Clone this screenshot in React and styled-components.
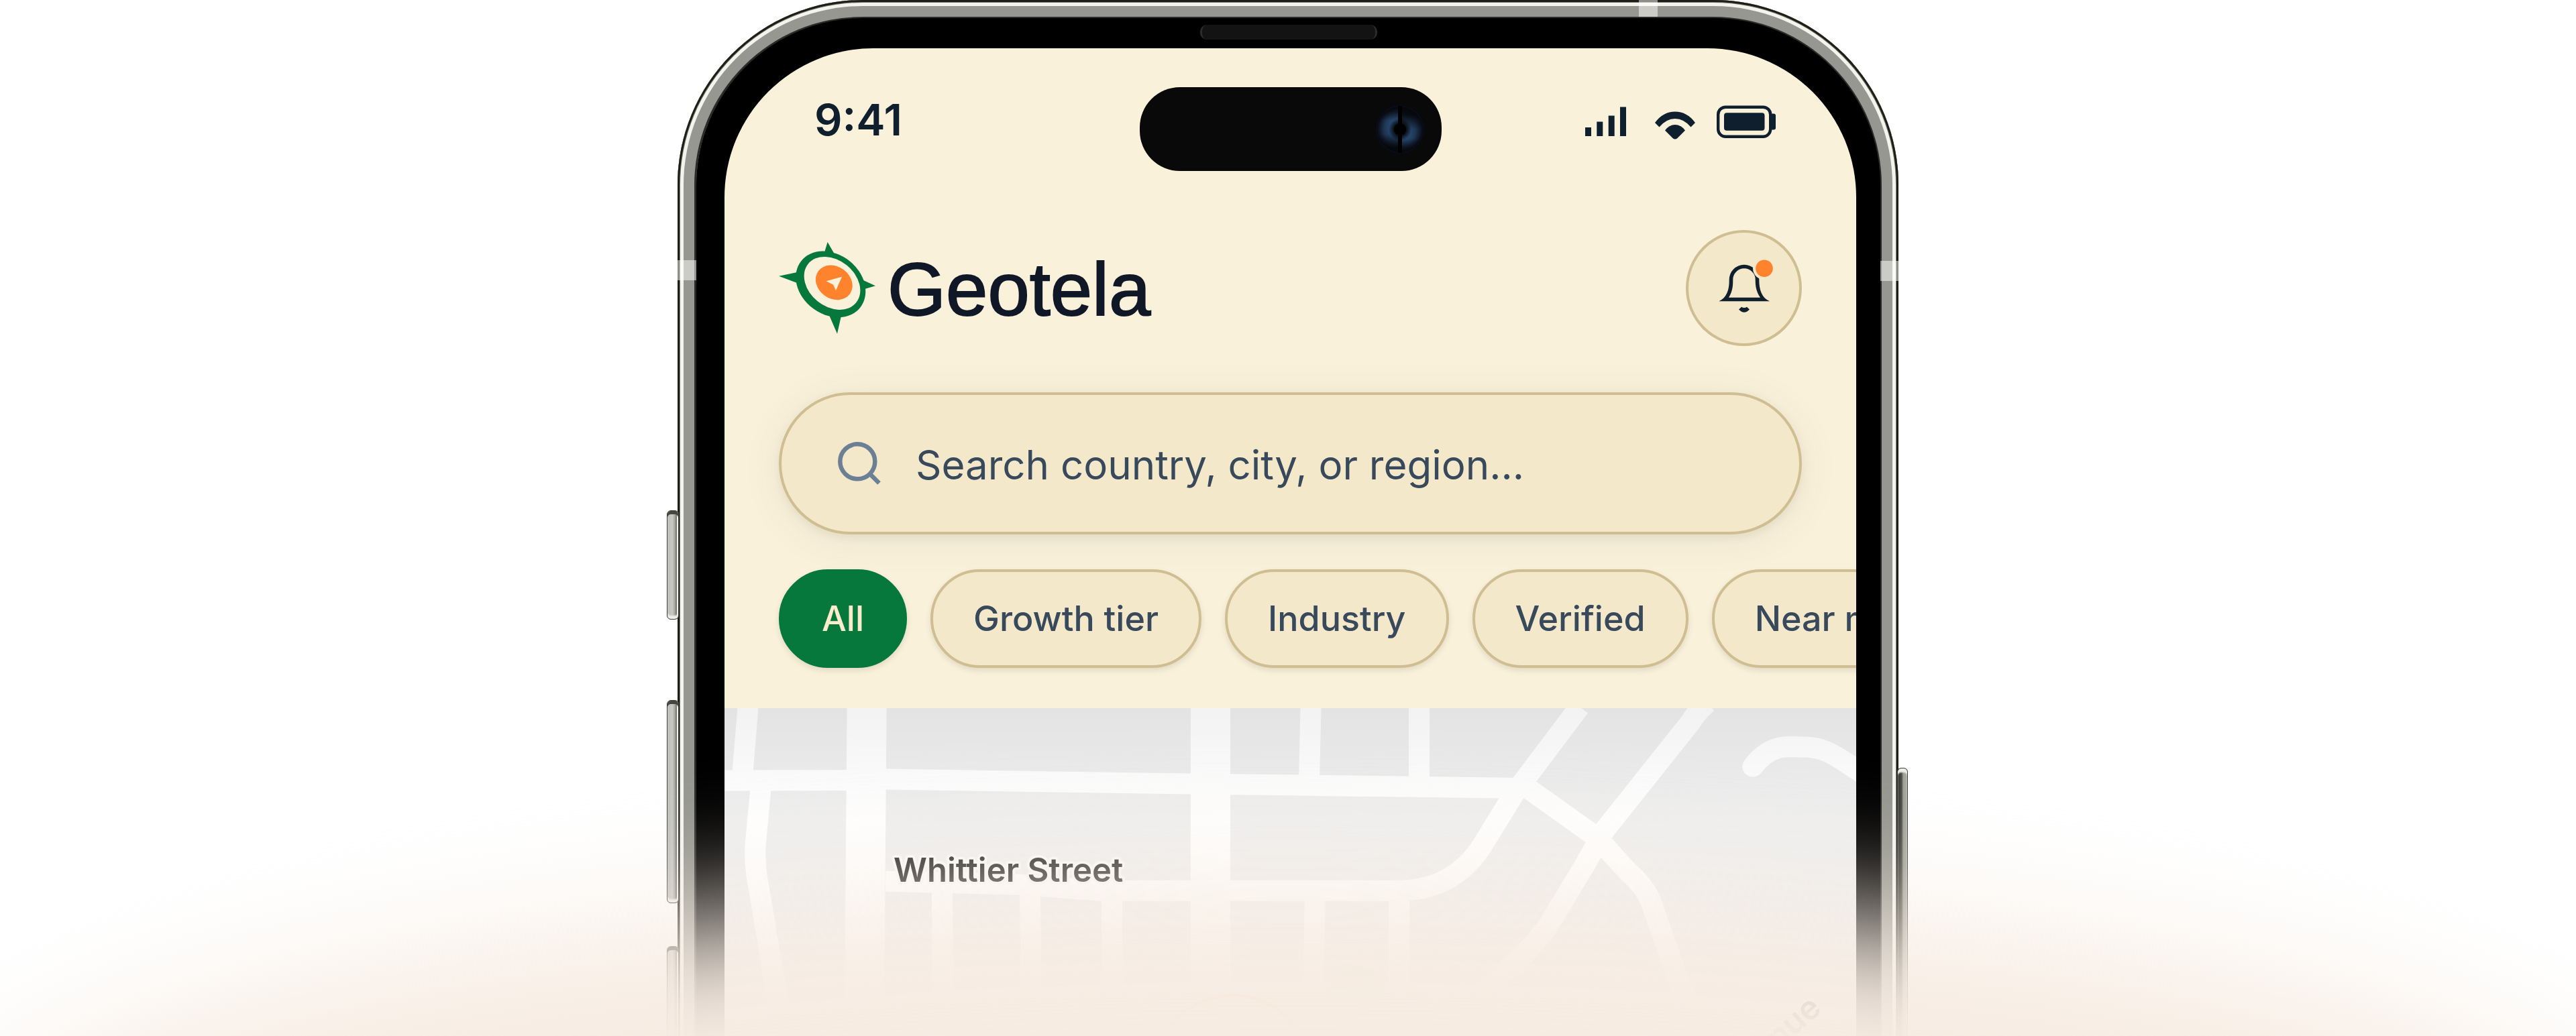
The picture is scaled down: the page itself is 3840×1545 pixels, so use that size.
import React from "react";
import styled, { createGlobalStyle } from "styled-components";

const color = {
  cream: "#faf1db",
  sand: "#f3e8ca",
  sandBorder: "#cfbe92",
  ink: "#0f1f2e",
  slate: "#38495b",
  green: "#06783b",
  orange: "#ff822d",
};

const GlobalStyle = createGlobalStyle`
  *, *::before, *::after { box-sizing: border-box; }
  body {
    margin: 0;
    background: #ffffff;
    font-family: Inter, "Liberation Sans", sans-serif;
  }
`;

const Hero = styled.main`
  position: relative;
  display: flex;
  justify-content: center;
  height: 100vh;
  overflow: hidden;
`;

const Phone = styled.div`
  position: relative;
  display: flex;
  width: 1820px;
  max-width: 100%;
  margin-bottom: -40px;
`;

const Frame = styled.div`
  display: flex;
  flex: 1;
  min-width: 0;
  padding: 27px 27px 0 28px;
  border-radius: 276px 276px 0 0;
  background: #969790;
  box-shadow:
    inset 0 0 0 3px #1e1d17,
    inset 0 0 0 4px #7b7b6d,
    inset 0 0 0 9px #f4f4ef,
    inset 0 0 0 25px #969790,
    inset 0 0 0 28px #2b2b29;
`;

const Bezel = styled.div`
  position: relative;
  display: flex;
  flex: 1;
  min-width: 0;
  padding: 45px 36px 0 42px;
  border-radius: 249px 249px 0 0;
  background: #000000;
`;

const Speaker = styled.div`
  position: absolute;
  top: 10px;
  left: 50%;
  width: 264px;
  height: 22px;
  transform: translateX(-50%);
  border: solid #2c2c2c;
  border-width: 0 3px;
  border-radius: 10px;
  background: #131313;
`;

const Screen = styled.div`
  display: flex;
  flex: 1;
  flex-direction: column;
  min-width: 0;
  overflow: hidden;
  border-radius: 222px 222px 0 0;
  background: ${color.cream};
`;

const SideButton = styled.span`
  position: absolute;
  top: ${(p) => p.$top}px;
  ${(p) => (p.$side === "left" ? "left: -16px;" : "right: -14px;")}
  width: ${(p) => (p.$side === "left" ? 18 : 16)}px;
  height: ${(p) => p.$height}px;
  border: 1px solid #3c3e38;
  border-radius: 6px;
  background: ${(p) =>
    p.$side === "left"
      ? "linear-gradient(90deg, #b9bab4, #c9cac4 45%, #a5a6a0 70%, #6c6d66 84%, #f4f4ef 90%)"
      : "linear-gradient(90deg, #2f322b, #4c4f47 40%, #9fa199 60%, #a9aaa3)"};
  box-shadow:
    inset 0 ${(p) => (p.$side === "left" ? 5 : -5)}px 0 #45473f,
    inset 0 ${(p) => (p.$side === "left" ? -5 : 6)}px 2px #eeeee8;
`;

const Antenna = styled.span`
  position: absolute;
  background: rgba(255, 255, 255, 0.5);
  ${(p) => (p.$edge === "top" ? "top: 0; left: 1433px; width: 28px; height: 25px;" : "")}
  ${(p) => (p.$edge === "left" ? "top: 388px; left: 0; width: 28px; height: 30px;" : "")}
  ${(p) => (p.$edge === "right" ? "top: 389px; right: 0; width: 27px; height: 30px;" : "")}
`;

const StatusBar = styled.div`
  display: grid;
  grid-template-columns: 1fr auto 1fr;
  padding: 58px 120px 0 134px;
`;

const Clock = styled.time`
  color: ${color.ink};
  font-size: 65px;
  font-weight: 600;
  line-height: 98px;
`;

const Island = styled.div`
  display: flex;
  align-items: center;
  justify-content: flex-end;
  width: 450px;
  height: 125px;
  margin-right: 14px;
  padding-right: 26px;
  border-radius: 60px;
  background: #090909;
`;

const StatusIcons = styled.div`
  display: flex;
  align-items: flex-start;
  justify-content: flex-end;
  gap: 32px;
  padding-top: 27px;
  color: ${color.ink};

  svg {
    display: block;
    fill: currentColor;
  }
`;

const Header = styled.header`
  display: flex;
  flex-direction: column;
  padding: 88px 81px 60px;
`;

const BrandRow = styled.div`
  display: flex;
  align-items: center;
  justify-content: space-between;
`;

const Brand = styled.a`
  display: flex;
  align-items: center;
  gap: 18px;
  color: #101827;
  text-decoration: none;
`;

const BrandName = styled.span`
  padding-top: 4px;
  font-family: "Liberation Sans", Arial, sans-serif;
  font-size: 112px;
  line-height: 132px;
  -webkit-text-stroke: 2px #101827;
`;

const BellButton = styled.button`
  display: flex;
  align-items: center;
  justify-content: center;
  width: 173px;
  height: 173px;
  padding: 0;
  border: 4px solid ${color.sandBorder};
  border-radius: 50%;
  background: ${color.sand};
`;

const SearchBox = styled.label`
  display: flex;
  align-items: center;
  gap: 52px;
  height: 212px;
  margin-top: 69px;
  padding: 0 84px;
  border: 4px solid ${color.sandBorder};
  border-radius: 106px;
  background: ${color.sand};
  box-shadow:
    0 5px 14px rgba(70, 80, 40, 0.08),
    0 8px 60px rgba(70, 80, 40, 0.08);
`;

const SearchInput = styled.input`
  flex: 1;
  min-width: 0;
  padding: 4px 0 0;
  border: 0;
  outline: 0;
  background: transparent;
  color: ${color.slate};
  font: 400 60px/80px Inter, sans-serif;

  &::placeholder {
    color: ${color.slate};
    opacity: 1;
  }
`;

const Chips = styled.div`
  display: flex;
  gap: 35px;
  margin-top: 52px;
`;

const Chip = styled.button`
  flex: none;
  height: 147px;
  padding: 0 60px;
  border: 4px solid ${(p) => (p.$active ? color.green : color.sandBorder)};
  border-radius: 74px;
  background: ${(p) => (p.$active ? color.green : color.sand)};
  box-shadow: 0 4px 8px rgba(70, 70, 40, 0.14);
  color: ${(p) => (p.$active ? "#faeccd" : color.slate)};
  font: 500 52px/64px Inter, sans-serif;
  white-space: nowrap;
`;

const MapArea = styled.section`
  position: relative;
  flex: 1;
  overflow: hidden;
  background: #efefef;

  &::after {
    content: "";
    position: absolute;
    inset: 0 0 auto;
    height: 170px;
    background: linear-gradient(rgba(0, 0, 0, 0.05), rgba(0, 0, 0, 0));
  }
`;

const Roads = styled.svg`
  display: block;
  width: 100%;
`;

const StreetLabel = styled.span`
  position: absolute;
  top: ${(p) => p.$top}px;
  left: ${(p) => p.$left}px;
  transform: rotate(${(p) => p.$angle || 0}deg);
  color: #161616;
  font-size: 49px;
  font-weight: 600;
  line-height: 60px;
  white-space: nowrap;
  text-shadow:
    4px 0 1px #fafafa,
    -4px 0 1px #fafafa,
    0 4px 1px #fafafa,
    0 -4px 1px #fafafa,
    3px 3px 1px #fafafa,
    -3px 3px 1px #fafafa,
    3px -3px 1px #fafafa,
    -3px -3px 1px #fafafa;
`;

const Glow = styled.div`
  position: absolute;
  bottom: -635px;
  left: -2%;
  width: 104%;
  height: 860px;
  border-radius: 50%;
  background: #f7ece2;
  filter: blur(95px);
  pointer-events: none;
`;

function Lens() {
  return (
    <svg width="72" height="74" viewBox="-36 -37 72 74" aria-hidden="true">
      <defs>
        <radialGradient id="lens">
          <stop offset="0.2" stopColor="#000000" />
          <stop offset="0.5" stopColor="#27476d" />
          <stop offset="0.7" stopColor="#1f3857" />
          <stop offset="1" stopColor="#090a12" />
        </radialGradient>
        <linearGradient id="shadeLeft" x1="0" y1="0" x2="0" y2="1">
          <stop offset="0" stopColor="#06070b" stopOpacity="0.9" />
          <stop offset="0.3" stopColor="#06070b" stopOpacity="0" />
          <stop offset="0.6" stopColor="#06070b" stopOpacity="0.1" />
          <stop offset="0.9" stopColor="#06070b" stopOpacity="0.95" />
        </linearGradient>
        <linearGradient id="shadeRight" x1="0" y1="1" x2="0" y2="0">
          <stop offset="0" stopColor="#06070b" stopOpacity="0.9" />
          <stop offset="0.3" stopColor="#06070b" stopOpacity="0" />
          <stop offset="0.5" stopColor="#06070b" stopOpacity="0.1" />
          <stop offset="0.85" stopColor="#06070b" stopOpacity="0.95" />
        </linearGradient>
      </defs>
      <circle r="36" fill="#090d1a" />
      <circle r="34" fill="url(#lens)" />
      <path d="M0-34A34 34 0 0 0 0 34z" fill="url(#shadeLeft)" />
      <path d="M0-34A34 34 0 0 1 0 34z" fill="url(#shadeRight)" />
      <path d="M0-35v70" stroke="#000000" strokeWidth="6" />
      <circle r="9" fill="#000000" />
    </svg>
  );
}

function SignalIcon() {
  return (
    <svg width="61" height="50" viewBox="0 0 61 50" aria-hidden="true">
      <path d="M0 33h9v13H0zM17.300 24.500h9V46h-9zM34.700 15.500h9V46h-9zM52 2.500h9V46h-9z" />
    </svg>
  );
}

function WifiIcon() {
  return (
    <svg width="71" height="51" viewBox="-11 0 71 51" aria-hidden="true">
      <path d="M0 26Q12 9.500 30 9.500T60 26l-6.500 6.500Q43 20 30 20T6.500 32.500z" />
      <path d="M15 37.500Q21 29 30 29T45 37.500L33 49.500Q30 51.500 27 49.500z" />
    </svg>
  );
}

function BatteryIcon() {
  return (
    <svg width="88" height="50" viewBox="0 0 88 50" aria-hidden="true">
      <rect x="2.200" y="2.700" width="78" height="44" rx="11" fill="none" stroke="currentColor" strokeWidth="4.400" />
      <rect x="11" y="11.200" width="60.500" height="26.500" rx="4" />
      <path d="M82 12.500h3q3 0 3 3v18q0 3-3 3h-3z" />
    </svg>
  );
}

function CompassMark() {
  return (
    <svg width="144" height="137" viewBox="1162.700 360.700 144 137" aria-hidden="true">
      <g fill={color.green}>
        <path d="M1235.300 360.700L1229.500 380H1246.500zM1162.700 411.400L1190 405.800V421.800zM1306.700 426L1286 416.500L1288 431.500zM1249.700 497.500L1236.500 467L1257 465z" />
        <ellipse cx="1240" cy="423.600" rx="56" ry="44.700" transform="rotate(38 1240 423.600)" />
      </g>
      <ellipse cx="1242.200" cy="422.100" rx="46" ry="34.600" fill={color.cream} transform="rotate(39 1242.200 422.100)" />
      <ellipse cx="1245" cy="421.100" rx="29" ry="24" fill={color.orange} transform="rotate(36 1245 421.100)" />
      <path d="M1233.300 419L1256.700 412.500L1247.700 432.900L1243.700 424.300z" fill={color.cream} />
    </svg>
  );
}

function BellIcon() {
  return (
    <svg width="96" height="96" viewBox="-48 -48 96 96" aria-hidden="true">
      <path
        fill={color.ink}
        fillRule="evenodd"
        d="M-37.700 19.300C-26 14-22 2-22.300-13A22.300 22.300 0 0 1 22.300-13C22.300 2 26 14 38 19.300ZM-23 13.700H24C17.500 4 16.700-4 16.700-13A16.700 16.700 0 0 0-16.700-13C-16.700-4-17 4-23 13.700Z"
      />
      <path fill={color.ink} d="M-8 31.500L-4 27.700Q0 30.500 4 27.700L8 31.500Q0 40-8 31.500Z" />
      <circle cx="30" cy="-29.700" r="17" fill={color.sand} />
      <circle cx="30" cy="-29.700" r="12.800" fill={color.orange} />
    </svg>
  );
}

function SearchIcon() {
  return (
    <svg width="64" height="64" viewBox="0 0 64 64" fill="none" stroke="#6b7f95" strokeWidth="6.500" aria-hidden="true">
      <circle cx="29.300" cy="29.300" r="26" />
      <path d="M48.500 48.500L61.500 61.500" />
    </svg>
  );
}

function RoadMap() {
  return (
    <Roads viewBox="0 0 1686 489" aria-hidden="true">
      <circle cx="942" cy="425" r="42" fill="#e2ead8" />
      <g fill="none" stroke="#ffffff" strokeWidth="31">
        <path d="M35-2L26 108M55 108L46 205Q45 225 48 250L84 464L86 500" />
        <path d="M0 108L180 107.500L240 106L695 113L820 114.500L1190 119.500" />
        <path d="M873.500-2L871 108M1035-2V112" />
        <path d="M1274-2L1176 128L1130 203Q1090 268 1012 272H700L560 272L440 263L240 258" />
        <path d="M1464-8Q1448 6 1440 20L1311 182L1278 240L1226 326Q1208 350 1190 368Q1150 405 1127 430L1108 500" />
        <path d="M1192 116L1300 193L1345 243Q1377 270 1385 303L1435 445L1446 500" />
        <path d="M1532 87C1560 50 1590 58 1607 58C1645 58 1660 76 1700 100" strokeLinecap="round" />
        <path d="M324 262L326 489M455 266L458 489M577 272L578 489M880 272L876 489M1005 272V489" />
      </g>
      <g fill="none" stroke="#ffffff" strokeWidth="59">
        <path d="M212-2L208 500M724-2V500" />
      </g>
      <circle cx="757" cy="544" r="116" fill="#fbe3d3" fillOpacity="0.5" stroke="#ffa26b" strokeWidth="5" />
    </Roads>
  );
}

const filters = ["All", "Growth tier", "Industry", "Verified", "Near me"];

export default function App() {
  return (
    <>
      <GlobalStyle />
      <Hero>
        <Phone>
          <SideButton $side="left" $top={761} $height={163} />
          <SideButton $side="left" $top={1044} $height={303} />
          <SideButton $side="left" $top={1411} $height={303} />
          <SideButton $side="right" $top={1145} $height={480} />
          <Frame>
            <Bezel>
              <Speaker />
              <Screen>
                <StatusBar>
                  <Clock>9:41</Clock>
                  <Island>
                    <Lens />
                  </Island>
                  <StatusIcons>
                    <SignalIcon />
                    <WifiIcon />
                    <BatteryIcon />
                  </StatusIcons>
                </StatusBar>
                <Header>
                  <BrandRow>
                    <Brand href="#home">
                      <CompassMark />
                      <BrandName>Geotela</BrandName>
                    </Brand>
                    <BellButton type="button" aria-label="Notifications">
                      <BellIcon />
                    </BellButton>
                  </BrandRow>
                  <SearchBox>
                    <SearchIcon />
                    <SearchInput type="text" aria-label="Search" placeholder="Search country, city, or region..." />
                  </SearchBox>
                  <Chips>
                    {filters.map((name, i) => (
                      <Chip key={name} type="button" $active={i === 0}>
                        {name}
                      </Chip>
                    ))}
                  </Chips>
                </Header>
                <MapArea aria-label="Map">
                  <RoadMap />
                  <StreetLabel $top={212} $left={252}>
                    Whittier Street
                  </StreetLabel>
                  <StreetLabel $top={468} $left={1471} $angle={-42}>
                    Avenue
                  </StreetLabel>
                </MapArea>
              </Screen>
            </Bezel>
          </Frame>
          <Antenna $edge="top" />
          <Antenna $edge="left" />
          <Antenna $edge="right" />
        </Phone>
        <Glow />
      </Hero>
    </>
  );
}
